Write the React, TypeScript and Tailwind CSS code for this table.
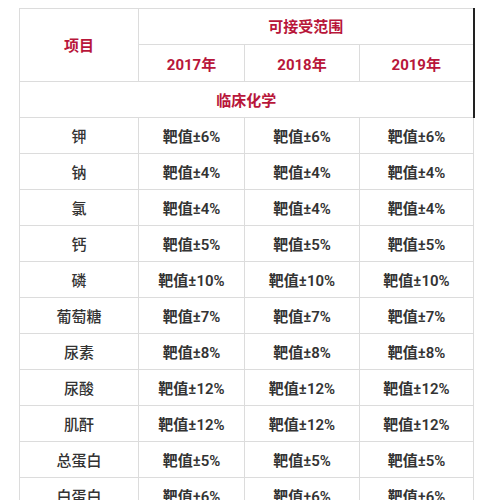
const rows: [string, number][] = [
  ['钾', 6],
  ['钠', 4],
  ['氯', 4],
  ['钙', 5],
  ['磷', 10],
  ['葡萄糖', 7],
  ['尿素', 8],
  ['尿酸', 12],
  ['肌酐', 12],
  ['总蛋白', 5],
  ['白蛋白', 6],
];

const font = { fontFamily: 'Roboto, "Noto Sans CJK SC", "Noto Sans", sans-serif' };

export default function App() {
  return (
    <div className="min-h-screen w-full bg-white pt-[8px] pl-[19px]" style={font}>
      <table className="table-fixed border-collapse w-[454px] text-[15px] leading-none">
        <colgroup>
          <col className="w-[119px]" />
          <col className="w-[106px]" />
          <col className="w-[115px]" />
          <col className="w-[114px]" />
        </colgroup>
        <thead>
          <tr className="h-[36px]">
            <th rowSpan={2} className="border border-[#dcdcdc] pt-[2px] text-[#b8163a] font-bold text-center">
              项目
            </th>
            <th colSpan={3} className="border border-[#dcdcdc] border-r-2 border-r-[#222] pt-[2px] text-[#b8163a] font-bold text-center">
              可接受范围
            </th>
          </tr>
          <tr className="h-[37px]">
            <th className="border border-[#dcdcdc] pt-[4px] text-[#b8163a] font-bold text-center">2017年</th>
            <th className="border border-[#dcdcdc] pt-[4px] text-[#b8163a] font-bold text-center">2018年</th>
            <th className="border border-[#dcdcdc] border-r-2 border-r-[#222] pt-[4px] text-[#b8163a] font-bold text-center">
              2019年
            </th>
          </tr>
        </thead>
        <tbody>
          <tr className="h-[36px]">
            <td colSpan={4} className="border border-[#dcdcdc] border-r-2 border-r-[#222] pt-[3px] text-[#b8163a] font-bold text-center">
              临床化学
            </td>
          </tr>
          {rows.map(([name, pct]) => (
            <tr key={name} className="h-[36px]">
              <td className="border border-[#dcdcdc] pt-[4px] text-[#333] font-medium text-center">{name}</td>
              <td className="border border-[#dcdcdc] pt-[4px] text-[#333] font-semibold text-center">靶值±{pct}%</td>
              <td className="border border-[#dcdcdc] pt-[4px] text-[#333] font-semibold text-center">靶值±{pct}%</td>
              <td className="border border-[#dcdcdc] pt-[4px] text-[#333] font-semibold text-center">靶值±{pct}%</td>
            </tr>
          ))}
        </tbody>
      </table>
    </div>
  );
}
